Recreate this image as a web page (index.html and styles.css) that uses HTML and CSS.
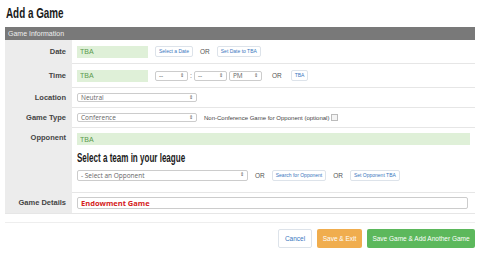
FILE: index.html
```html
<!DOCTYPE html>
<html lang="en">
<head>
  <meta charset="UTF-8" />
  <meta name="viewport" content="width=device-width, initial-scale=1" />
  <title>Add a Game</title>
  <link rel="stylesheet" href="styles.css">
</head>
<body>

  <h1 class="page-title"><span class="squeeze">Add a Game</span></h1>

  <div class="game-form">
    <div class="panel-heading">Game Information</div>

    <div class="form-row row-date">
      <div class="form-label">Date</div>
      <div class="form-field">
        <input type="text" class="input-tba input-short" value="TBA" readonly>
        <button class="btn-link">Select a Date</button>
        <span class="or">OR</span>
        <button class="btn-link">Set Date to TBA</button>
      </div>
    </div>

    <div class="form-row row-time">
      <div class="form-label">Time</div>
      <div class="form-field">
        <input type="text" class="input-tba input-short" value="TBA" readonly>
        <span class="select select-time">--<span class="arrows">&#8661;</span></span>
        <span class="colon">:</span>
        <span class="select select-time">--<span class="arrows">&#8661;</span></span>
        <span class="select select-ampm">PM<span class="arrows">&#8661;</span></span>
        <span class="or">OR</span>
        <button class="btn-link">TBA</button>
      </div>
    </div>

    <div class="form-row row-location">
      <div class="form-label">Location</div>
      <div class="form-field">
        <span class="select select-wide">Neutral<span class="arrows">&#8661;</span></span>
      </div>
    </div>

    <div class="form-row row-type">
      <div class="form-label">Game Type</div>
      <div class="form-field">
        <span class="select select-wide">Conference<span class="arrows">&#8661;</span></span>
        <span class="note">Non-Conference Game for Opponent (optional)</span>
        <span class="checkbox"></span>
      </div>
    </div>

    <div class="form-row row-opponent">
      <div class="form-label">Opponent</div>
      <div class="form-field field-stack">
        <input type="text" class="input-tba input-full" value="TBA" readonly>
        <h2 class="league-title"><span class="squeeze">Select a team in your league</span></h2>
        <div class="field-line">
          <span class="select select-opponent">- Select an Opponent<span class="arrows">&#8661;</span></span>
          <span class="or">OR</span>
          <button class="btn-link">Search for Opponent</button>
          <span class="or">OR</span>
          <button class="btn-link">Set Opponent TBA</button>
        </div>
      </div>
    </div>

    <div class="form-row row-details">
      <div class="form-label">Game Details</div>
      <div class="form-field">
        <input type="text" class="input-details" value="Endowment Game">
      </div>
    </div>
  </div>

  <div class="form-actions">
    <button class="btn btn-cancel">Cancel</button>
    <button class="btn btn-warning">Save &amp; Exit</button>
    <button class="btn btn-success">Save Game &amp; Add Another Game</button>
  </div>

</body>
</html>
```

FILE: styles.css
```css
:root {
  --label-bg: #ececec;
  --heading-bg: #797979;
  --line: #e6e6e6;
  --tba-bg: #dff0d8;
  --tba-text: #5a9a4c;
  --link: #3a77c0;
  --text: #333;
}

body {
  margin: 0;
  padding: 0 5px;
  font-family: "Liberation Sans", Arial, sans-serif;
  color: var(--text);
  background: #fff;
}

/* no condensed face installed, so squeeze the headline text */
.squeeze {
  display: inline-block;
  transform: scaleX(0.68);
  transform-origin: left center;
  white-space: nowrap;
}

.page-title {
  margin: 0;
  padding: 5px 0 0 1px;
  height: 22px;
  font-size: 14.5px;
  line-height: 16px;
  font-weight: bold;
  color: #1a1a1a;
}

.game-form {
  width: 470px;
  border-bottom: 1px solid var(--line);
}

.panel-heading {
  height: 13px;
  background: var(--heading-bg);
  color: #eee;
  font-size: 7px;
  line-height: 13px;
  padding-left: 3px;
}

.form-row {
  display: flex;
}

.form-label {
  width: 61px;
  flex: none;
  background: var(--label-bg);
  padding-right: 6px;
  font-size: 7.5px;
  font-weight: bold;
  color: #444;
  display: flex;
  align-items: center;
  justify-content: flex-end;
}

.form-field {
  flex: 1;
  display: flex;
  align-items: center;
  padding-left: 5px;
  border-top: 1px solid var(--line);
}

.row-date .form-field { border-top: none; }
.row-date { height: 23px; }
.row-time { height: 24px; }
.row-location { height: 20px; }
.row-type { height: 20px; }
.row-details { height: 21px; }
.row-opponent { height: 65px; }

.row-opponent .form-label {
  align-items: flex-start;
  padding-top: 6px;
}

.field-stack {
  flex-direction: column;
  align-items: flex-start;
  padding-top: 5px;
}

input {
  font-family: inherit;
  margin: 0;
  box-sizing: border-box;
  outline: none;
}

.input-tba {
  height: 12px;
  border: none;
  background: var(--tba-bg);
  color: var(--tba-text);
  font-size: 7px;
  padding: 0 3px;
}

.input-short {
  width: 71px;
  margin-right: 7px;
}

.input-full {
  width: 393px;
}

.league-title {
  margin: 8px 0 6px;
  font-size: 12px;
  line-height: 11px;
  font-weight: bold;
  color: #1a1a1a;
}

.league-title .squeeze {
  transform: scaleX(0.67);
}

.field-line {
  display: flex;
  align-items: center;
}

.btn-link {
  height: 11px;
  padding: 0 3px;
  border: 1px solid #dde3ea;
  border-radius: 2px;
  background: #fff;
  color: var(--link);
  font-family: "Liberation Sans", Arial, sans-serif;
  font-size: 5px;
  line-height: 9px;
  box-sizing: border-box;
}

.or {
  font-size: 6.5px;
  color: #555;
  margin: 0 7px;
}

.select {
  position: relative;
  display: inline-block;
  box-sizing: border-box;
  height: 9px;
  border: 1px solid #ccc;
  border-radius: 2px;
  background: #fff;
  font-family: "Open Sans", sans-serif;
  font-size: 6.5px;
  line-height: 7px;
  color: #666;
  padding-left: 3px;
}

.arrows {
  position: absolute;
  right: 3px;
  top: 0;
  font-size: 5px;
  line-height: 7px;
  color: #555;
}

.select-time {
  width: 33px;
}

.colon {
  font-size: 7px;
  color: #666;
  margin: 0 2px;
}

.select-ampm {
  width: 33px;
  margin-left: 2px;
}

.select-time, .select-ampm { height: 10px; line-height: 8px; }

.row-time .or { margin: 0 9px 0 10px; }

.select-wide {
  width: 120px;
}

.note {
  font-size: 6px;
  color: #444;
  margin-left: 7px;
}

.checkbox {
  width: 5px;
  height: 5px;
  border: 1px solid #bbb;
  margin-left: 2px;
  background: #f4f4f4;
}

.select-opponent {
  width: 171px;
  height: 11px;
  line-height: 9px;
}

.field-line .or { margin: 0 7px 0 7px; }

.input-details {
  width: 391px;
  height: 12px;
  border: 1px solid #ccc;
  border-radius: 2px;
  font-family: "Open Sans", sans-serif;
  font-weight: bold;
  font-size: 7.5px;
  color: #d42020;
  padding: 0 3px;
}

.form-actions {
  margin-top: 8px;
  width: 470px;
  border-top: 1px solid #eee;
  padding-top: 6px;
  display: flex;
  justify-content: flex-end;
  gap: 5px;
}

.btn {
  height: 19px;
  padding: 0;
  border-radius: 2px;
  border: 1px solid transparent;
  font-family: "Liberation Sans", Arial, sans-serif;
  font-size: 6.5px;
  color: #fff;
}

.btn-cancel {
  width: 34px;
  background: #fff;
  border-color: #dde3ea;
  color: var(--link);
}

.btn-warning {
  width: 45px;
  background: #f0ad4e;
}

.btn-success {
  width: 108px;
  background: #5cb85c;
}
```
